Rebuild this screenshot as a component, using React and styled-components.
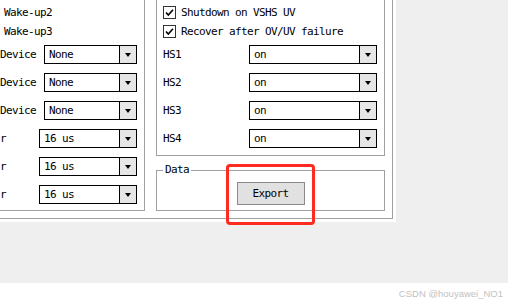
import React from "react";
import styled, { createGlobalStyle } from "styled-components";

const GlobalStyle = createGlobalStyle`
  html, body {
    margin: 0;
    padding: 0;
    background: #ffffff;
  }
`;

const Page = styled.div`
  position: relative;
  width: 508px;
  height: 304px;
  display: flex;
  flex-direction: column;
  overflow: hidden;
  font-family: "DejaVu Sans Mono", "Liberation Mono", monospace;
  font-size: 11px;
  letter-spacing: -0.62px;
  color: #000;
`;

const Desk = styled.div`
  height: 283px;
  flex: none;
  background: #efefef;
  display: flex;
  align-items: flex-start;
`;

const Panel = styled.div`
  width: 396px;
  height: 222px;
  box-sizing: border-box;
  background: #fff;
  padding: 0 3px 3px 0;
  display: flex;
`;

const Frame = styled.div`
  flex: 1;
  box-sizing: border-box;
  border-right: 1px solid #a0a0a0;
  border-bottom: 1px solid #a0a0a0;
  padding: 0 7px 7px 0;
  display: flex;
  gap: 11px;
`;

const LeftGroup = styled.div`
  width: 145px;
  box-sizing: border-box;
  border-right: 1px solid #a0a0a0;
  border-bottom: 1px solid #a0a0a0;
  padding: 3px 7px 0 0;
  display: flex;
  flex-direction: column;
`;

const RightColumn = styled.div`
  flex: 1;
  display: flex;
  flex-direction: column;
  gap: 8px;
`;

const OptionsGroup = styled.div`
  box-sizing: border-box;
  border: 1px solid #a0a0a0;
  border-top: none;
  padding: 3px 7px 7px 6px;
  display: flex;
  flex-direction: column;
`;

const TextRow = styled.div`
  height: 19px;
  display: flex;
  align-items: center;
  padding-left: ${(p) => p.$indent || 0}px;
  white-space: nowrap;
`;

const Stack = styled.div`
  margin-top: 4px;
  display: flex;
  flex-direction: column;
  gap: 9px;
`;

const FieldRow = styled.div`
  height: 19px;
  display: flex;
  align-items: center;
  justify-content: space-between;
`;

const Label = styled.span`
  white-space: nowrap;
`;

const Combo = styled.div`
  width: ${(p) => p.$width}px;
  height: 19px;
  box-sizing: border-box;
  border: 1px solid #000;
  background: #fff;
  display: flex;
`;

const ComboText = styled.span`
  flex: 1;
  display: flex;
  align-items: center;
  padding-left: 4px;
  white-space: nowrap;
`;

const ComboButton = styled.span`
  width: 16px;
  flex: none;
  border-left: 1px solid #000;
  background: #e6e6e6;
  display: flex;
  align-items: center;
  justify-content: center;

  &::after {
    content: "";
    border-left: 3.5px solid transparent;
    border-right: 3.5px solid transparent;
    border-top: 4px solid #000;
    margin-top: 1px;
  }
`;

const CheckRow = styled.label`
  height: 19px;
  display: flex;
  align-items: center;
  gap: 5px;
  white-space: nowrap;
`;

const Box = styled.span`
  width: 13px;
  height: 13px;
  box-sizing: border-box;
  border: 1px solid #333;
  background: #fff;
  display: flex;
  align-items: center;
  justify-content: center;
  flex: none;
`;

const DataSet = styled.fieldset`
  margin: 0;
  padding: 6px 0 5px;
  border: 1px solid #a0a0a0;
  min-width: 0;
`;

const Legend = styled.legend`
  margin-left: 6px;
  padding: 0 2px;
  line-height: 12px;
`;

const Center = styled.div`
  display: flex;
  justify-content: center;
`;

const Button = styled.button`
  width: 68px;
  height: 23px;
  box-sizing: border-box;
  border: 1px solid #8a8a8a;
  background: #e1e1e1;
  font: inherit;
  letter-spacing: inherit;
  color: #000;
  padding: 0;
`;

const Callout = styled.div`
  position: absolute;
  left: 226px;
  top: 164px;
  width: 89px;
  height: 61px;
  box-sizing: border-box;
  border: 3px solid #ff2a20;
  border-radius: 4px;
  pointer-events: none;
`;

const Footer = styled.div`
  flex: 1;
  background: #fff;
  display: flex;
  align-items: center;
  justify-content: flex-end;
  padding-right: 5px;
  font-family: "Liberation Sans", Arial, sans-serif;
  font-size: 9.5px;
  letter-spacing: 0;
  color: #c2c2c2;
`;

const Check = () => (
  <Box>
    <svg width="11" height="11" viewBox="0 0 11 11">
      <path d="M2 5.5 L4.3 8 L9 2.8" fill="none" stroke="#000" strokeWidth="1.6" />
    </svg>
  </Box>
);

const Select = ({ width, value }) => (
  <Combo $width={width}>
    <ComboText>{value}</ComboText>
    <ComboButton />
  </Combo>
);

const leftRows = [
  { label: "Device", value: "None", width: 93 },
  { label: "Device", value: "None", width: 93 },
  { label: "Device", value: "None", width: 93 },
  { label: "r", value: "16 us", width: 98 },
  { label: "r", value: "16 us", width: 98 },
  { label: "r", value: "16 us", width: 98 },
];

const hsRows = ["HS1", "HS2", "HS3", "HS4"];

export default function App() {
  return (
    <Page>
      <GlobalStyle />
      <Desk>
        <Panel>
          <Frame>
            <LeftGroup>
              <TextRow $indent={4}>Wake-up2</TextRow>
              <TextRow $indent={4}>Wake-up3</TextRow>
              <Stack>
                {leftRows.map((r, i) => (
                  <FieldRow key={i}>
                    <Label>{r.label}</Label>
                    <Select width={r.width} value={r.value} />
                  </FieldRow>
                ))}
              </Stack>
            </LeftGroup>
            <RightColumn>
              <OptionsGroup>
                <CheckRow>
                  <Check />
                  Shutdown on VSHS UV
                </CheckRow>
                <CheckRow>
                  <Check />
                  Recover after OV/UV failure
                </CheckRow>
                <Stack>
                  {hsRows.map((name) => (
                    <FieldRow key={name}>
                      <Label>{name}</Label>
                      <Select width={128} value="on" />
                    </FieldRow>
                  ))}
                </Stack>
              </OptionsGroup>
              <DataSet>
                <Legend>Data</Legend>
                <Center>
                  <Button>Export</Button>
                </Center>
              </DataSet>
            </RightColumn>
          </Frame>
        </Panel>
      </Desk>
      <Footer>CSDN @houyawei_NO1</Footer>
      <Callout />
    </Page>
  );
}
